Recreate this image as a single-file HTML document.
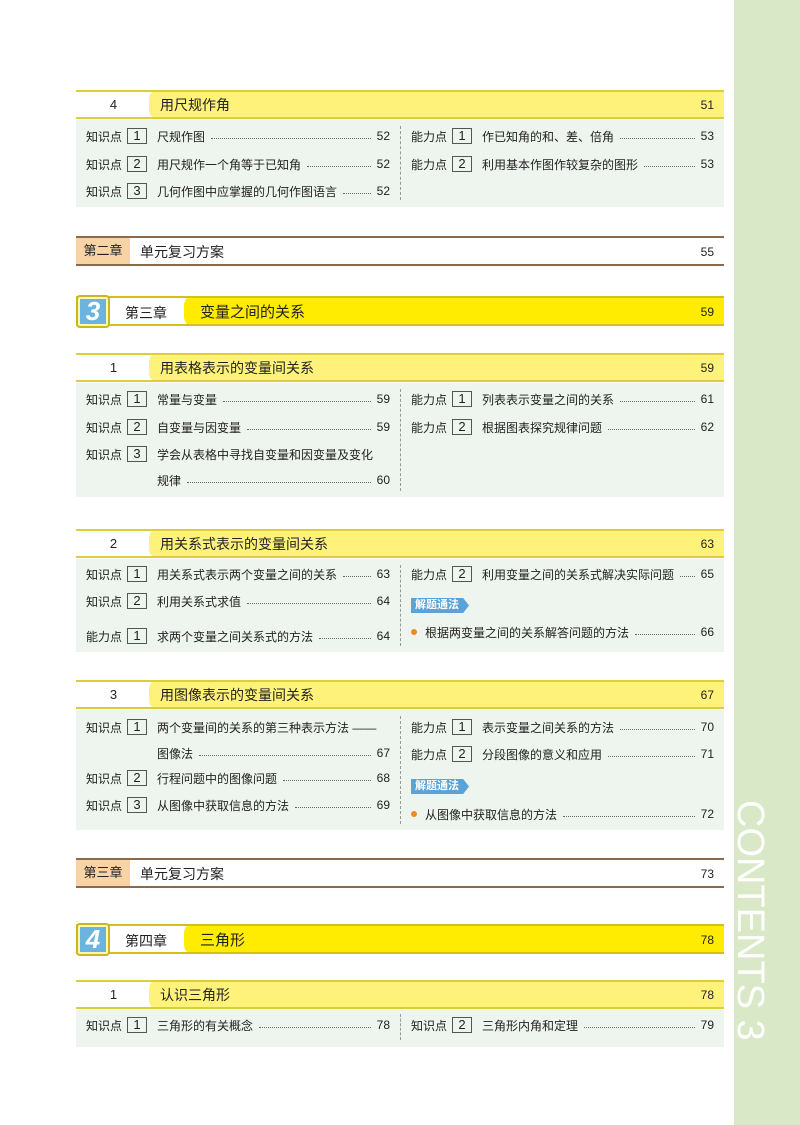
<!DOCTYPE html>
<html><head><meta charset="utf-8"><style>
*{margin:0;padding:0;box-sizing:border-box}
body{width:800px;height:1125px;position:relative;background:#fff;font-family:"Liberation Sans","Noto Sans CJK SC",sans-serif;color:#222;overflow:hidden}
.side{position:absolute;left:734px;top:0;width:66px;height:1125px;background:#d9e8c6}
.side span{position:absolute;left:-4px;top:800px;width:40px;writing-mode:vertical-rl;color:#fff;font-size:38px;letter-spacing:0px;line-height:40px;white-space:nowrap}
.sh{position:absolute;left:76px;width:648px;height:29px;border-top:2px solid #dccd3a;border-bottom:2px solid #dccd3a;background:#fff}
.sh .y{position:absolute;left:77px;top:0;right:0;bottom:0;background:#fff27a}
.sh .n{position:absolute;left:0;width:75px;top:5px;text-align:center;font-size:13px}
.sh .t{position:absolute;left:84px;top:3px;font-size:14px}
.sh .p{position:absolute;right:10px;top:6px;font-size:12px}
.wave{position:absolute;left:-4px;top:0;bottom:0;width:8px;background:#fff27a;border-radius:50% 0 0 50%/30% 0 0 30%}
.ch{position:absolute;left:76px;width:648px;height:30px;border-top:2px solid #d2c020;border-bottom:2px solid #d2c020;background:#fff}
.ch .y{position:absolute;left:112px;top:0;right:0;bottom:0;background:#ffec00}
.ch .y .wave{background:#ffec00}
.ch .ic{position:absolute;left:0;top:-3px;width:34px;height:33px;border:2px solid #c9b624;border-radius:4px;background:#fff8b0;padding:2px}
.ch .ic i{display:block;width:100%;height:100%;background:#6bb4e0;color:#fff;font:italic bold 26px/25px "Liberation Sans",sans-serif;text-align:center}
.ch .c{position:absolute;left:49px;top:5px;font-size:14px}
.ch .t{position:absolute;left:124px;top:3px;font-size:15px}
.ch .p{position:absolute;right:10px;top:7px;font-size:12px}
.rv{position:absolute;left:76px;width:648px;height:30px;border-top:2px solid #8a6a4a;border-bottom:2px solid #8a6a4a}
.rv .l{position:absolute;left:0;top:0;width:54px;height:100%;background:#f7d3a6;font-size:13px;text-align:center;line-height:26px}
.rv .t{position:absolute;left:64px;top:4px;font-size:14px}
.rv .p{position:absolute;right:10px;top:7px;font-size:12px}
.bd{position:absolute;left:76px;width:648px;background:#eef4ee}
.dv{position:absolute;left:400px;border-left:1px dashed #999;width:0}
.r{position:absolute;display:flex;align-items:center;height:18px;font-size:12px;white-space:nowrap}
.r .lb{width:41px}
.r .bx{display:inline-block;width:20px;height:16px;border:1px solid #555;text-align:center;line-height:14px;font-size:13px;margin-right:10px}
.r .ld{flex:1;border-bottom:1.5px dotted #666;margin:0 6px;height:0;align-self:center;position:relative;top:2px}
.L{left:86px;width:304px}
.R{left:411px;width:303px}
.badge{position:absolute;left:411px;height:15px;width:58px;background:#5aa3d8;color:#fff;font-size:11px;font-weight:bold;line-height:15px;padding-left:4px;clip-path:polygon(0 0,90% 0,100% 50%,90% 100%,0 100%)}
.dot{display:inline-block;width:6px;height:6px;border-radius:50%;background:#f08a20;margin-right:8px}
</style></head><body>
<div class="side"><span>CONTENTS 3</span></div>

<div class="sh" style="top:90px"><div class="n">4</div><div class="y"><div class="wave"></div></div><div class="t">用尺规作角</div><div class="p">51</div></div>
<div class="bd" style="top:120px;height:87px"></div>
<div class="dv" style="top:126px;height:74px"></div>
<div class="r L" style="top:127px"><span class="lb">知识点</span><span class="bx">1</span>尺规作图<span class="ld"></span>52</div>
<div class="r L" style="top:155px"><span class="lb">知识点</span><span class="bx">2</span>用尺规作一个角等于已知角<span class="ld"></span>52</div>
<div class="r L" style="top:182px"><span class="lb">知识点</span><span class="bx">3</span>几何作图中应掌握的几何作图语言<span class="ld"></span>52</div>
<div class="r R" style="top:127px"><span class="lb">能力点</span><span class="bx">1</span>作已知角的和、差、倍角<span class="ld"></span>53</div>
<div class="r R" style="top:155px"><span class="lb">能力点</span><span class="bx">2</span>利用基本作图作较复杂的图形<span class="ld"></span>53</div>

<div class="rv" style="top:236px"><div class="l">第二章</div><div class="t">单元复习方案</div><div class="p">55</div></div>

<div class="ch" style="top:296px"><div class="y"><div class="wave"></div></div><div class="ic"><i>3</i></div><div class="c">第三章</div><div class="t">变量之间的关系</div><div class="p">59</div></div>

<div class="sh" style="top:353px"><div class="n">1</div><div class="y"><div class="wave"></div></div><div class="t">用表格表示的变量间关系</div><div class="p">59</div></div>
<div class="bd" style="top:383px;height:114px"></div>
<div class="dv" style="top:389px;height:102px"></div>
<div class="r L" style="top:390px"><span class="lb">知识点</span><span class="bx">1</span>常量与变量<span class="ld"></span>59</div>
<div class="r L" style="top:418px"><span class="lb">知识点</span><span class="bx">2</span>自变量与因变量<span class="ld"></span>59</div>
<div class="r L" style="top:445px"><span class="lb">知识点</span><span class="bx">3</span>学会从表格中寻找自变量和因变量及变化</div>
<div class="r" style="left:157px;width:233px;top:471px">规律<span class="ld"></span>60</div>
<div class="r R" style="top:390px"><span class="lb">能力点</span><span class="bx">1</span>列表表示变量之间的关系<span class="ld"></span>61</div>
<div class="r R" style="top:418px"><span class="lb">能力点</span><span class="bx">2</span>根据图表探究规律问题<span class="ld"></span>62</div>

<div class="sh" style="top:529px"><div class="n">2</div><div class="y"><div class="wave"></div></div><div class="t">用关系式表示的变量间关系</div><div class="p">63</div></div>
<div class="bd" style="top:559px;height:93px"></div>
<div class="dv" style="top:565px;height:81px"></div>
<div class="r L" style="top:565px"><span class="lb">知识点</span><span class="bx">1</span>用关系式表示两个变量之间的关系<span class="ld"></span>63</div>
<div class="r L" style="top:592px"><span class="lb">知识点</span><span class="bx">2</span>利用关系式求值<span class="ld"></span>64</div>
<div class="r L" style="top:627px"><span class="lb">能力点</span><span class="bx">1</span>求两个变量之间关系式的方法<span class="ld"></span>64</div>
<div class="r R" style="top:565px"><span class="lb">能力点</span><span class="bx">2</span>利用变量之间的关系式解决实际问题<span class="ld"></span>65</div>
<div class="badge" style="top:598px">解题通法</div>
<div class="r R" style="top:623px"><span class="dot"></span>根据两变量之间的关系解答问题的方法<span class="ld"></span>66</div>

<div class="sh" style="top:680px"><div class="n">3</div><div class="y"><div class="wave"></div></div><div class="t">用图像表示的变量间关系</div><div class="p">67</div></div>
<div class="bd" style="top:710px;height:120px"></div>
<div class="dv" style="top:716px;height:108px"></div>
<div class="r L" style="top:718px"><span class="lb">知识点</span><span class="bx">1</span>两个变量间的关系的第三种表示方法 ——</div>
<div class="r" style="left:157px;width:233px;top:744px">图像法<span class="ld"></span>67</div>
<div class="r L" style="top:769px"><span class="lb">知识点</span><span class="bx">2</span>行程问题中的图像问题<span class="ld"></span>68</div>
<div class="r L" style="top:796px"><span class="lb">知识点</span><span class="bx">3</span>从图像中获取信息的方法<span class="ld"></span>69</div>
<div class="r R" style="top:718px"><span class="lb">能力点</span><span class="bx">1</span>表示变量之间关系的方法<span class="ld"></span>70</div>
<div class="r R" style="top:745px"><span class="lb">能力点</span><span class="bx">2</span>分段图像的意义和应用<span class="ld"></span>71</div>
<div class="badge" style="top:779px">解题通法</div>
<div class="r R" style="top:805px"><span class="dot"></span>从图像中获取信息的方法<span class="ld"></span>72</div>

<div class="rv" style="top:858px"><div class="l">第三章</div><div class="t">单元复习方案</div><div class="p">73</div></div>

<div class="ch" style="top:924px"><div class="y"><div class="wave"></div></div><div class="ic"><i>4</i></div><div class="c">第四章</div><div class="t">三角形</div><div class="p">78</div></div>

<div class="sh" style="top:980px"><div class="n">1</div><div class="y"><div class="wave"></div></div><div class="t">认识三角形</div><div class="p">78</div></div>
<div class="bd" style="top:1010px;height:37px"></div>
<div class="dv" style="top:1014px;height:26px"></div>
<div class="r L" style="top:1016px"><span class="lb">知识点</span><span class="bx">1</span>三角形的有关概念<span class="ld"></span>78</div>
<div class="r R" style="top:1016px"><span class="lb">知识点</span><span class="bx">2</span>三角形内角和定理<span class="ld"></span>79</div>
</body></html>
